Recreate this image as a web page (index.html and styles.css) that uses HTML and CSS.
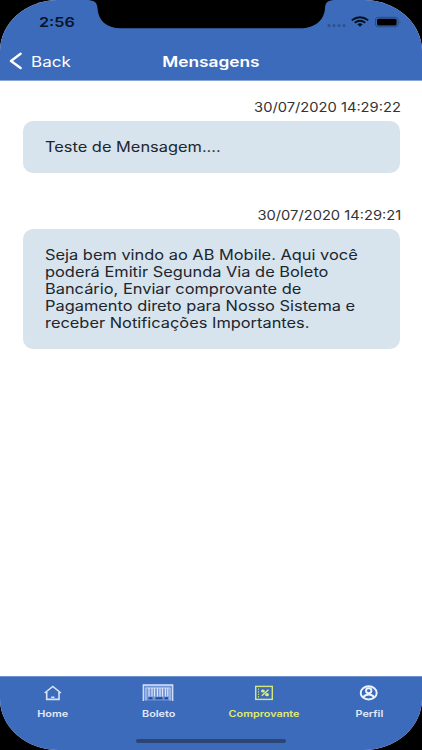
FILE: index.html
```html
<!DOCTYPE html>
<html lang="pt-BR">
<head>
	<meta charset="utf-8">
	<title>Mensagens</title>
	<link rel="stylesheet" href="styles.css">
</head>
<body>
	<div class="screen">
		<header class="header">
			<svg class="notch" width="250" height="29" viewBox="0 0 250 29">
				<path d="M0 0C8 0 11 2 11.5 8C12 20 20 28.3 35 28.3H214C229 28.3 238.500 20 239 8C239.500 2 242 0 250 0Z" fill="#000"/>
			</svg>
			<div class="status-bar">
				<span class="stretch time">2:56</span>
				<div class="status-icons">
					<svg width="76" height="14" viewBox="0 0 76 14">
						<g fill="#2f5088">
							<circle cx="3" cy="10.600" r="1.500"/>
							<circle cx="8" cy="10.600" r="1.500"/>
							<circle cx="13" cy="10.600" r="1.500"/>
							<circle cx="18" cy="10.600" r="1.500"/>
						</g>
						<g fill="none" stroke="#07101f" stroke-width="1.900">
							<path d="M25.800 5.200Q34 -0.800 42.200 5.200"/>
							<path d="M28.700 7.700Q34 3.900 39.300 7.700"/>
						</g>
						<path d="M31.300 9.300Q34 7.400 36.700 9.300L34 11.800Z" fill="#07101f"/>
						<rect x="49.400" y="2.300" width="22.800" height="9.500" rx="2.800" fill="none" stroke="#2c4a80"/>
						<rect x="51" y="3.700" width="19.600" height="6.700" rx="1.500" fill="#000"/>
						<path d="M73.700 5.400Q75.500 7 73.700 8.700Z" fill="#2c4a80"/>
					</svg>
				</div>
			</div>
			<div class="nav-bar">
				<a class="back">
					<svg width="14" height="18" viewBox="0 0 14 18">
						<path d="M12.600 1.800L3 9L12.600 16" fill="none" stroke="#fff" stroke-width="2.400" stroke-linecap="round" stroke-linejoin="round"/>
					</svg>
					<span class="stretch">Back</span>
				</a>
				<h1 class="title"><span class="stretch">Mensagens</span></h1>
			</div>
		</header>

		<main class="messages">
			<section class="message">
				<div class="date"><span class="stretch">30/07/2020 14:29:22</span></div>
				<div class="bubble"><p class="stretch">Teste de Mensagem....</p></div>
			</section>
			<section class="message">
				<div class="date"><span class="stretch">30/07/2020 14:29:21</span></div>
				<div class="bubble">
					<p class="stretch">Seja bem vindo ao AB Mobile. Aqui você<br>poderá Emitir Segunda Via de Boleto<br>Bancário, Enviar comprovante de<br>Pagamento direto para Nosso Sistema e<br>receber Notificações Importantes.</p>
				</div>
			</section>
		</main>

		<footer class="footer">
			<nav class="tabs">
				<a class="tab">
					<svg width="32" height="18" viewBox="0 0 32 18">
						<g fill="none" stroke="#d8e3f8" stroke-width="1.600">
							<path d="M7.700 9L15.800 2.500L23.900 9M9.700 8V15.400H22V8"/>
							<path d="M14.200 13.300H17.400"/>
						</g>
					</svg>
					<span class="stretch">Home</span>
				</a>
				<a class="tab">
					<svg width="32" height="18" viewBox="0 0 32 18">
						<rect x="1.500" y="1" width="29" height="15.500" fill="#6f94d8"/>
						<path d="M1.300 17V1H30.700V17" fill="none" stroke="#d8e3f8" stroke-width="1.300"/>
						<path d="M4 16.500V4H28V16.500" fill="none" stroke="#c1d2f1"/>
						<path d="M7 4V12.500M10 4V12.500M12.500 4V12.500M15.500 4V12.500M18 4V12.500M20.500 4V12.500M23.500 4V12.500M25.800 4V12.500" stroke="#dbe5f8" stroke-width="1.200"/>
						<path d="M6.500 14.300H10.500M13.500 14.300H20.500M22.500 14.300H26" stroke="#244a94" stroke-width="2"/>
					</svg>
					<span class="stretch">Boleto</span>
				</a>
				<a class="tab active">
					<svg width="32" height="18" viewBox="0 0 32 18">
						<rect x="7.700" y="2.400" width="16.600" height="13" fill="none" stroke="#d7e779" stroke-width="1.400"/>
						<path d="M10.500 4.500V14" stroke="#bdd080" stroke-width="1" stroke-dasharray="1.500 1"/>
						<path d="M20.500 5.700L13.800 11.700" stroke="#e4ed72" stroke-width="1.400"/>
						<ellipse cx="14.900" cy="7" rx="1.900" ry="1.600" fill="#e4ed72"/>
						<ellipse cx="19" cy="10.700" rx="1.900" ry="1.600" fill="#e4ed72"/>
					</svg>
					<span class="stretch">Comprovante</span>
				</a>
				<a class="tab">
					<svg width="32" height="18" viewBox="0 0 32 18">
						<g fill="none" stroke="#edf3ff" stroke-width="1.900">
							<ellipse cx="15.700" cy="8.900" rx="8" ry="6.600"/>
							<ellipse cx="15.700" cy="6.700" rx="2.700" ry="2.400"/>
							<path d="M10.200 13.600C11.400 11 13.300 10.500 15.700 10.500S20 11 21.200 13.600"/>
						</g>
					</svg>
					<span class="stretch">Perfil</span>
				</a>
			</nav>
			<div class="home-indicator"></div>
		</footer>
	</div>
</body>
</html>
```

FILE: styles.css
```css
* {
	box-sizing: border-box;
}
body {
	margin: 0;
	background-color: #000;
	font-family: Inter, "Liberation Sans", sans-serif;
}
svg {
	display: block;
}
.screen {
	display: flex;
	flex-direction: column;
	width: 422px;
	height: 750px;
	background-color: #fff;
	border-radius: 58px / 51px;
	overflow: hidden;
}
/* text is wider than the font's own proportions */
.stretch {
	display: inline-block;
	transform: scaleX(1.155);
	transform-origin: left center;
	white-space: nowrap;
}
.header {
	position: relative;
	height: 81px;
	background-color: #3c6bbb;
	border-bottom: 1px solid #88a5d6;
}
.notch {
	position: absolute;
	left: 86px;
	top: 0;
}
.status-bar {
	display: flex;
	justify-content: space-between;
	height: 42px;
	padding: 14px 20px 0 39px;
}
.time {
	font-size: 13.5px;
	line-height: 17px;
	font-weight: 600;
	color: #07132a;
	transform: scaleX(1.2);
}
.status-icons {
	padding-top: 1px;
}
.nav-bar {
	display: grid;
	grid-template-columns: 1fr auto 1fr;
	align-items: center;
	height: 38px;
	padding: 0 8px;
	color: #fff;
}
.back {
	display: flex;
	align-items: center;
	gap: 9px;
	font-size: 14.2px;
}
.back .stretch {
	transform: scaleX(1.2);
}
.title {
	margin: 0;
	font-size: 14.2px;
	font-weight: 600;
}
.title .stretch,
.tab .stretch {
	transform: scaleX(1.22);
	transform-origin: center;
}
.messages {
	flex: 1;
	padding: 17px 22px 0 23px;
}
.message {
	margin-bottom: 33.6px;
}
.date {
	height: 22.6px;
	text-align: right;
	font-size: 13px;
	line-height: 18px;
	color: #333;
}
.date .stretch {
	transform: translateX(1px) scaleX(1.13);
	transform-origin: right center;
}
.bubble {
	padding: 17px 22px 18px;
	border-radius: 10px;
	background-color: #d7e3ed;
}
.bubble p {
	display: block;
	width: max-content;
	margin: 0;
	font-size: 14.2px;
	line-height: 17px;
	color: #20262d;
}
.footer {
	height: 74px;
	background-color: #3c6bbb;
	border-top: 1px solid #6f92cf;
}
.tabs {
	display: grid;
	grid-template-columns: repeat(4, 1fr);
	height: 62px;
	padding-top: 7px;
}
.tab {
	display: flex;
	flex-direction: column;
	align-items: center;
	gap: 5px;
	font-size: 8.9px;
	line-height: 13px;
	font-weight: 600;
	color: #e3ebfb;
}
.active {
	color: #e1ed67;
}
.home-indicator {
	width: 150px;
	height: 4px;
	margin: 0 auto;
	border-radius: 2px;
	background-color: #2c4573;
}
```
